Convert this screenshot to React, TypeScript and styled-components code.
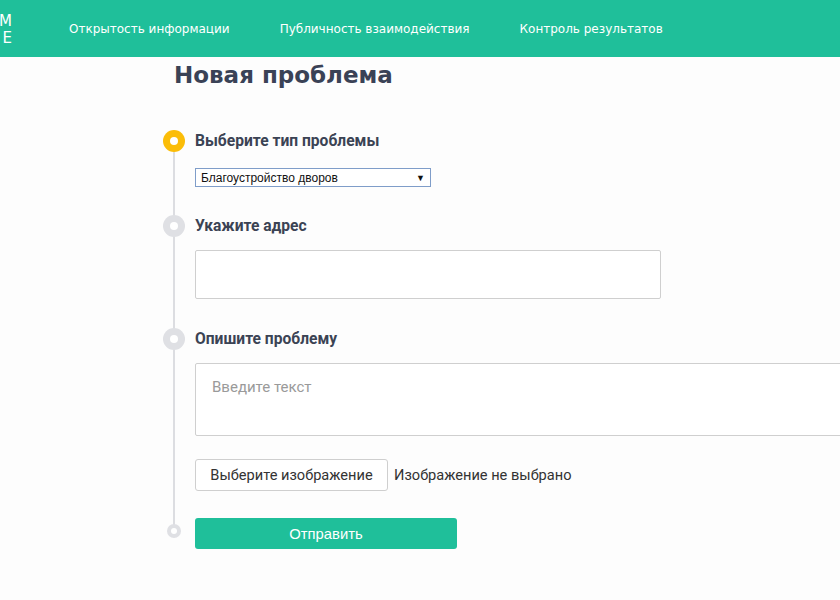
import React from 'react';
import styled, { createGlobalStyle } from 'styled-components';

const GlobalStyle = createGlobalStyle`
  html, body {
    margin: 0;
    padding: 0;
    background: #fdfdfd;
    overflow: hidden;
  }
  * {
    box-sizing: border-box;
  }
`;

const Page = styled.div`
  width: 840px;
  height: 600px;
  overflow: hidden;
  font-family: Roboto, "Liberation Sans", Arial, sans-serif;
`;

const Header = styled.header`
  height: 57px;
  background: #1fbf9a;
  display: flex;
  align-items: center;
`;

const Logo = styled.div`
  width: 12px;
  color: #fff;
  font-family: "DejaVu Sans", sans-serif;
  font-size: 15px;
  line-height: 17px;
  overflow: hidden;
  display: flex;
  flex-direction: column;
  align-items: flex-end;
  margin-top: 2px;
`;

const Nav = styled.nav`
  display: flex;
  gap: 50px;
  margin-left: 57px;
`;

const NavItem = styled.a`
  color: #fff;
  font-family: "DejaVu Sans", Verdana, sans-serif;
  font-size: 12px;
  text-decoration: none;
  white-space: nowrap;
`;

const Main = styled.main`
  padding-left: 163px;
`;

const Title = styled.h1`
  margin: 4px 0 0 11px;
  font-family: "DejaVu Sans", Verdana, sans-serif;
  font-size: 23px;
  line-height: 28px;
  font-weight: 700;
  color: #3a4256;
`;

const Steps = styled.div`
  margin-top: 41px;
  display: flex;
  flex-direction: column;
`;

const Step = styled.div<{ $last?: boolean; $pad: number }>`
  position: relative;
  display: grid;
  grid-template-columns: 22px 1fr;
  column-gap: 10px;
  padding-bottom: ${p => p.$pad}px;

  &::before {
    content: '';
    position: absolute;
    left: 10px;
    top: 11px;
    bottom: -11px;
    width: 2px;
    background: #dcdde1;
    display: ${p => (p.$last ? 'none' : 'block')};
  }
`;

const Marker = styled.span<{ $active?: boolean; $small?: boolean }>`
  position: relative;
  z-index: 1;
  width: ${p => (p.$small ? 14 : 22)}px;
  height: ${p => (p.$small ? 14 : 22)}px;
  margin: ${p => (p.$small ? '6px 0 0 4px' : '0')};
  border-radius: 50%;
  background: ${p => (p.$active ? '#fbbd08' : '#dfe0e4')};
  display: flex;
  align-items: center;
  justify-content: center;

  &::after {
    content: '';
    width: ${p => (p.$small ? 6 : 8)}px;
    height: ${p => (p.$small ? 6 : 8)}px;
    border-radius: 50%;
    background: #fff;
  }
`;

const Body = styled.div`
  display: flex;
  flex-direction: column;
  align-items: flex-start;
`;

const Label = styled.div<{ $gap: number }>`
  font-family: Roboto, sans-serif;
  font-size: 15.6px;
  font-weight: 700;
  line-height: 22px;
  color: #3b4354;
  margin-bottom: ${p => p.$gap}px;
`;

const SelectBox = styled.div`
  width: 236px;
  height: 19px;
  border: 1px solid #7f9dc9;
  background: #fff;
  display: flex;
  align-items: center;
  justify-content: space-between;
  padding: 0 5px 0 5px;
  font-family: "Liberation Sans", Arial, sans-serif;
  font-size: 12px;
  color: #111;
`;

const Arrow = styled.span`
  font-size: 9px;
  color: #111;
`;

const TextInput = styled.div`
  width: 466px;
  height: 49px;
  border: 1px solid #cfcfcf;
  border-radius: 2px;
  background: #fff;
`;

const TextArea = styled.div`
  width: 700px;
  height: 73px;
  border: 1px solid #cfcfcf;
  border-radius: 2px;
  background: #fff;
  padding: 14px 16px;
  font-family: Roboto, sans-serif;
  font-size: 15px;
  color: #9a9a9a;
`;

const FileRow = styled.div`
  margin-top: 23px;
  display: flex;
  align-items: center;
  gap: 6px;
`;

const FileButton = styled.button`
  height: 32px;
  width: 193px;
  border: 1px solid #cfcfcf;
  border-radius: 3px;
  background: #fff;
  font-family: Roboto, sans-serif;
  font-size: 14.6px;
  color: #333;
  padding: 0;
`;

const FileName = styled.span`
  font-family: Roboto, sans-serif;
  font-size: 14.6px;
  color: #333;
`;

const Submit = styled.button`
  width: 262px;
  height: 31px;
  border: none;
  border-radius: 3px;
  background: #1fbf9a;
  color: #fff;
  font-family: "Liberation Sans", Arial, sans-serif;
  font-size: 14.8px;
`;

export default function App() {
  return (
    <Page>
      <GlobalStyle />
      <Header>
        <Logo>
          <span>M</span>
          <span>E</span>
        </Logo>
        <Nav>
          <NavItem>Открытость информации</NavItem>
          <NavItem>Публичность взаимодействия</NavItem>
          <NavItem>Контроль результатов</NavItem>
        </Nav>
      </Header>
      <Main>
        <Title>Новая проблема</Title>
        <Steps>
          <Step $pad={28}>
            <Marker $active />
            <Body>
              <Label $gap={16}>Выберите тип проблемы</Label>
              <SelectBox>
                Благоустройство дворов
                <Arrow>▼</Arrow>
              </SelectBox>
            </Body>
          </Step>
          <Step $pad={29}>
            <Marker />
            <Body>
              <Label $gap={13}>Укажите адрес</Label>
              <TextInput />
            </Body>
          </Step>
          <Step $pad={27}>
            <Marker />
            <Body>
              <Label $gap={13}>Опишите проблему</Label>
              <TextArea>Введите текст</TextArea>
              <FileRow>
                <FileButton>Выберите изображение</FileButton>
                <FileName>Изображение не выбрано</FileName>
              </FileRow>
            </Body>
          </Step>
          <Step $last $pad={0}>
            <Marker $small />
            <Body>
              <Submit>Отправить</Submit>
            </Body>
          </Step>
        </Steps>
      </Main>
    </Page>
  );
}
